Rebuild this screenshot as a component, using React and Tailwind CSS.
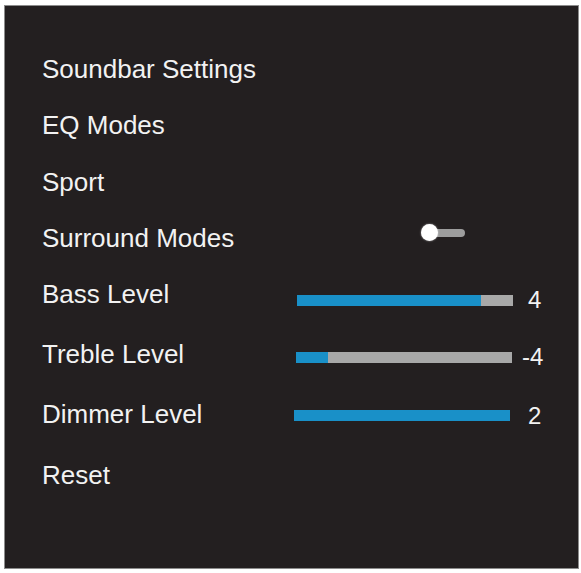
const ROWS = [
  { label: 'Soundbar Settings', h: 'h-[57px]' },
  { label: 'EQ Modes', h: 'h-[56px]' },
  { label: 'Sport', h: 'h-[57px]' },
  { label: 'Surround Modes', h: 'h-[56px]', toggle: true },
  { label: 'Bass Level', h: 'h-[56px]', slider: { fill: 85, value: '4', shift: 'mt-[12px] ml-[1px]', num: 'ml-[15px]' } },
  { label: 'Treble Level', h: 'h-[64px]', slider: { fill: 15, value: '-4', shift: 'mt-[6px] ml-0', num: 'ml-[10px]' } },
  { label: 'Dimmer Level', h: 'h-[56px]', slider: { fill: 100, value: '2', shift: 'mt-[3px] ml-[-2px]', num: 'ml-[18px]' } },
  { label: 'Reset', h: 'h-[66px]' },
]

function Toggle() {
  return (
    <div className="relative ml-[125px] mt-[-12px] h-[17px] w-[44px]">
      <div className="absolute left-[9px] right-0 top-[5px] h-[8px] rounded-full bg-[#9d9d9d]" />
      <div className="absolute left-0 top-0 h-[17px] w-[17px] rounded-full bg-white shadow-[0_0_2px_rgba(255,255,255,0.6)]" />
    </div>
  )
}

function Slider({ fill, value, shift, num }) {
  return (
    <div className={`flex items-center ${shift}`}>
      <div className="h-[11px] w-[216px] bg-[#a8a8a8]">
        <div className="h-full bg-[#1990c8]" style={{ width: `${fill}%` }} />
      </div>
      <span className={`text-[24px] font-medium leading-none text-[#f2f2f2] ${num}`}>{value}</span>
    </div>
  )
}

export default function App() {
  return (
    <div className="min-h-screen bg-white pl-[4px] pt-[5px] font-['Liberation_Sans',Arial,sans-serif]">
      <div className="h-[564px] w-[575px] border border-[#8c8c8c] bg-[#231f20] pl-[37px] pt-[34px]">
        {ROWS.map(r => (
          <div key={r.label} className={`flex items-center ${r.h}`}>
            <span className="w-[254px] shrink-0 text-[26px] leading-none text-[#f2f2f2]">{r.label}</span>
            {r.toggle && <Toggle />}
            {r.slider && <Slider {...r.slider} />}
          </div>
        ))}
      </div>
    </div>
  )
}
